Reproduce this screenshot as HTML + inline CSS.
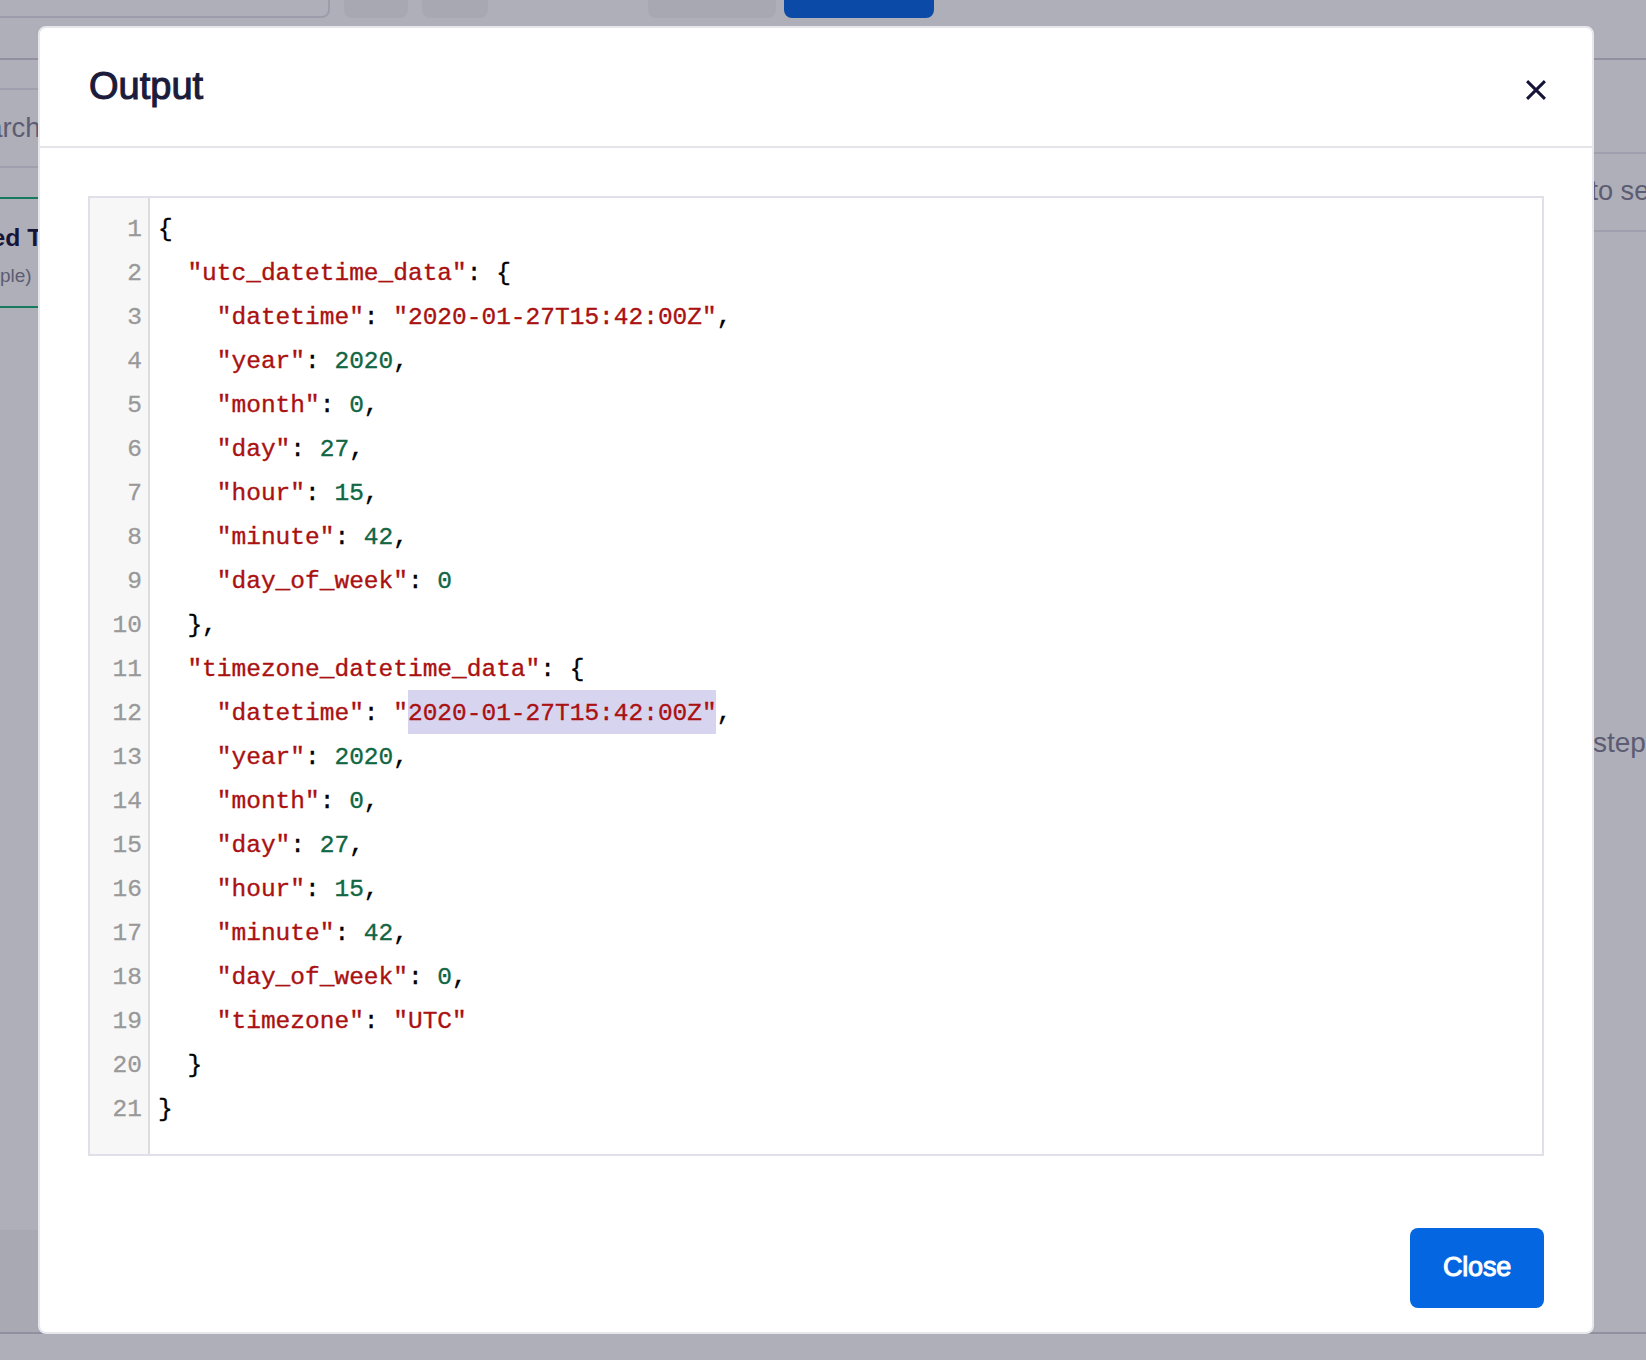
<!DOCTYPE html>
<html><head><meta charset="utf-8">
<style>
*{margin:0;padding:0;box-sizing:border-box}
html,body{width:1646px;height:1360px;overflow:hidden}
body{background:#afafb9;position:relative;font-family:"Liberation Sans",sans-serif}
.a{position:absolute}
/* background page (dimmed) */
.field{left:-20px;top:-20px;width:350px;height:38px;border:2px solid #9d9cab;border-radius:8px}
.gbtn{background:#a8a8b2;border-radius:8px;top:-20px;height:38px}
.bbtn{background:#0b4aa6;border-radius:8px;top:-20px;height:38px;left:784px;width:150px}
.hl{left:0;width:1646px;height:2px}
.bgtxt{color:#5c5c72;white-space:nowrap}
/* modal */
.modal{left:38px;top:26px;width:1556px;height:1308px;background:#fff;border:2px solid #e7e6ec;border-radius:8px;overflow:hidden}
.title{left:49px;top:37px;font-weight:normal;font-size:38px;-webkit-text-stroke:1.1px #1b1b3b;color:#1b1b3b;white-space:nowrap}
.hdiv{left:0;top:118px;width:1552px;height:2px;background:#e6e5ea}
.editor{left:48px;top:168px;width:1456px;height:960px;border:2px solid #e1e0e8;background:#fff;overflow:hidden}
.gutter{left:0;top:0;width:60px;height:956px;background:#f7f7f7;border-right:2px solid #ddd}
.code{font-family:"Liberation Mono",monospace;font-size:24.5px;line-height:44px;white-space:pre}
.ln{left:0;top:10px;-webkit-text-stroke:0.3px #999;width:52px;text-align:right;color:#999}
.txt{left:68px;top:10px;-webkit-text-stroke:0.35px currentColor;color:#000}
.s{color:#a11}
.n{color:#164}
.sel{background:#d7d4f0}
.btn{left:1370px;top:1200px;width:134px;height:80px;background:#0466e0;border-radius:8px;color:#fff;font-weight:normal;font-size:27px;letter-spacing:-0.2px;-webkit-text-stroke:1px #fff;text-align:center;line-height:78px}
</style></head><body>
<!-- dimmed background page -->
<div class="a field"></div>
<div class="a gbtn" style="left:344px;width:64px"></div>
<div class="a gbtn" style="left:422px;width:66px"></div>
<div class="a gbtn" style="left:648px;width:128px"></div>
<div class="a bbtn"></div>
<div class="a hl" style="top:58px;background:#9290a0"></div>
<div class="a hl" style="top:88px;background:#a09fae;width:40px"></div>
<div class="a hl" style="top:166px;background:#a09fae;width:40px"></div>
<div class="a hl" style="top:197px;background:#167a5e;width:40px"></div>
<div class="a hl" style="top:306px;background:#167a5e;width:40px"></div>
<div class="a hl" style="top:152px;background:#a09fae;left:1594px;width:52px"></div>
<div class="a hl" style="top:230px;background:#a09fae;left:1594px;width:52px"></div>
<div class="a" style="left:0;top:1230px;width:40px;height:102px;background:#a9a9b3"></div>
<div class="a hl" style="top:1332px;background:#9290a0"></div>
<div class="a bgtxt" style="left:-46.5px;top:112px;font-size:27.5px">Search</div>
<div class="a bgtxt" style="left:-8.5px;top:224px;font-size:24.7px;font-weight:bold;color:#151538">ed T</div>
<div class="a bgtxt" style="left:0px;top:265px;font-size:19px">ple)</div>
<div class="a bgtxt" style="left:1590.4px;top:175px;font-size:27.2px">to see</div>
<div class="a bgtxt" style="left:1593px;top:727px;font-size:28px">step</div>

<div class="a modal">
  <div class="a title">Output</div>
  <svg class="a" style="left:1484px;top:50px" width="24" height="24" viewBox="0 0 24 24"><path d="M3.1 3.1L20.9 20.9M20.9 3.1L3.1 20.9" stroke="#15153a" stroke-width="3" fill="none"/></svg>
  <div class="a hdiv"></div>
  <div class="a editor">
    <div class="a gutter"></div>
    <div class="a sel" style="left:318px;top:492px;width:308px;height:44px"></div>
    <div class="a code ln">1
2
3
4
5
6
7
8
9
10
11
12
13
14
15
16
17
18
19
20
21</div>
    <div class="a code txt">{
  <span class="s">"utc_datetime_data"</span>: {
    <span class="s">"datetime"</span>: <span class="s">"2020-01-27T15:42:00Z"</span>,
    <span class="s">"year"</span>: <span class="n">2020</span>,
    <span class="s">"month"</span>: <span class="n">0</span>,
    <span class="s">"day"</span>: <span class="n">27</span>,
    <span class="s">"hour"</span>: <span class="n">15</span>,
    <span class="s">"minute"</span>: <span class="n">42</span>,
    <span class="s">"day_of_week"</span>: <span class="n">0</span>
  },
  <span class="s">"timezone_datetime_data"</span>: {
    <span class="s">"datetime"</span>: <span class="s">"2020-01-27T15:42:00Z"</span>,
    <span class="s">"year"</span>: <span class="n">2020</span>,
    <span class="s">"month"</span>: <span class="n">0</span>,
    <span class="s">"day"</span>: <span class="n">27</span>,
    <span class="s">"hour"</span>: <span class="n">15</span>,
    <span class="s">"minute"</span>: <span class="n">42</span>,
    <span class="s">"day_of_week"</span>: <span class="n">0</span>,
    <span class="s">"timezone"</span>: <span class="s">"UTC"</span>
  }
}</div>
  </div>
  <div class="a btn">Close</div>
</div>
</body></html>
